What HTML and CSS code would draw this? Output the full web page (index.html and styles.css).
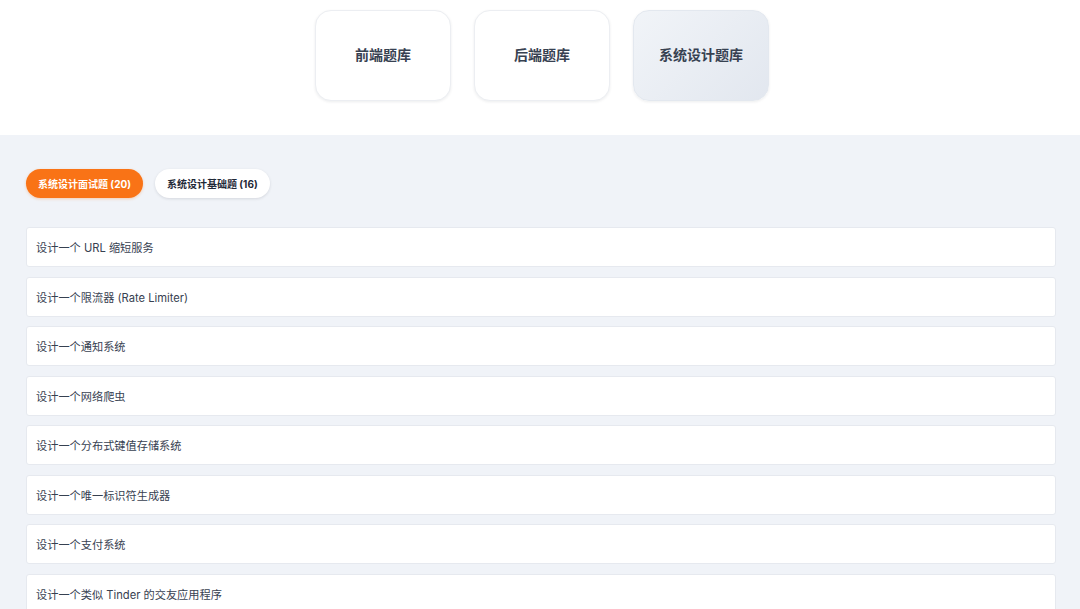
FILE: index.html
```html
<!DOCTYPE html>
<html lang="zh-CN">
<head>
  <meta charset="UTF-8">
  <meta name="viewport" content="width=device-width, initial-scale=1.0">
  <title>题库</title>
  <link rel="stylesheet" href="styles.css">
</head>
<body>
  <header class="bank-bar">
    <div class="bank-card">前端题库</div>
    <div class="bank-card">后端题库</div>
    <div class="bank-card active">系统设计题库</div>
  </header>

  <main class="content">
    <nav class="tabs">
      <button type="button" class="tab active">系统设计面试题 (20)</button>
      <button type="button" class="tab">系统设计基础题 (16)</button>
    </nav>

    <ul class="question-list">
      <li class="question">设计一个 URL 缩短服务</li>
      <li class="question">设计一个限流器 (Rate Limiter)</li>
      <li class="question">设计一个通知系统</li>
      <li class="question">设计一个网络爬虫</li>
      <li class="question">设计一个分布式键值存储系统</li>
      <li class="question">设计一个唯一标识符生成器</li>
      <li class="question">设计一个支付系统</li>
      <li class="question">设计一个类似 Tinder 的交友应用程序</li>
    </ul>
  </main>
</body>
</html>
```

FILE: styles.css
```css
* {
  box-sizing: border-box;
  margin: 0;
  padding: 0;
}

body {
  font-family: Inter, "Noto Sans CJK SC", sans-serif;
  color: #374151;
  background: #f0f3f8;
  overflow: hidden;
}

.bank-bar {
  display: flex;
  justify-content: center;
  gap: 23px;
  height: 135px;
  padding: 10px 0 0 4px;
  background: #ffffff;
}

.bank-card {
  display: flex;
  align-items: center;
  justify-content: center;
  width: 136px;
  height: 91px;
  padding-bottom: 4px;
  border: 1px solid #eceef2;
  border-radius: 16px;
  background: #ffffff;
  box-shadow: 0 1px 3px rgba(15, 23, 42, 0.08);
  font-size: 14px;
  font-weight: 700;
  color: #374151;
}

.bank-card.active {
  border-color: #e3e8ef;
  background: linear-gradient(135deg, #f1f4f8, #e2e7ef);
}

.content {
  padding: 34px 24px 0 26px;
}

.tabs {
  display: flex;
  gap: 12px;
  margin-bottom: 29px;
}

.tab {
  height: 29px;
  padding: 0 12px;
  border: none;
  border-radius: 15px;
  background: #ffffff;
  box-shadow: 0 1px 3px rgba(15, 23, 42, 0.12);
  font-family: inherit;
  font-size: 10px;
  font-weight: 700;
  color: #1f2937;
}

.tab.active {
  background: #f97316;
  color: #ffffff;
  box-shadow: 0 1px 3px rgba(249, 115, 22, 0.3);
}

.question-list {
  list-style: none;
  display: flex;
  flex-direction: column;
  gap: 9.5px;
}

.question {
  display: flex;
  align-items: center;
  height: 40px;
  padding: 0 9px;
  background: #ffffff;
  border: 1px solid #e6e9ef;
  border-radius: 3px;
  font-size: 11.2px;
  color: #374151;
}
```
